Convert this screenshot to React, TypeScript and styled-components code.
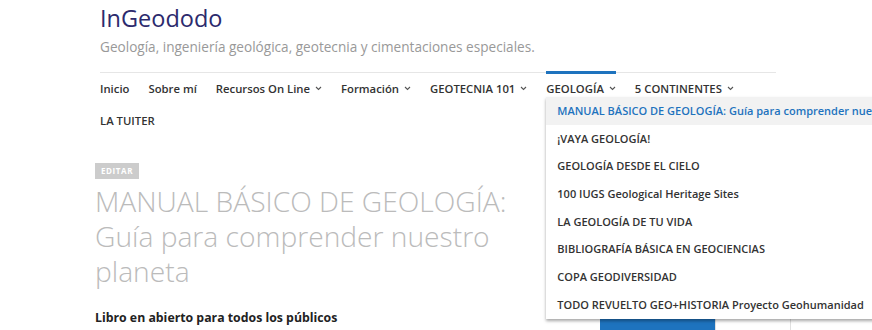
import React from "react";
import styled, { createGlobalStyle } from "styled-components";

const GlobalStyle = createGlobalStyle`
  html, body {
    margin: 0;
    padding: 0;
    background: #fff;
    overflow: hidden;
  }
  body {
    font-family: "Open Sans", "Liberation Sans", sans-serif;
    color: #333;
  }
  * { box-sizing: border-box; }
`;

const Page = styled.div`
  width: 872px;
  height: 330px;
  overflow: hidden;
`;

const Header = styled.header`
  padding: 0 96px 0 100px;
`;

const Branding = styled.div`
  padding-top: 3px;
  height: 72px;
`;

const SiteTitle = styled.div`
  font-size: 23.5px;
  line-height: 30px;
  color: #2c2a6d;
`;

const Tagline = styled.div`
  margin-top: 4px;
  font-size: 13.6px;
  line-height: 20px;
  color: #999;
`;

const Nav = styled.nav`
  border-top: 1px solid #e6e6e6;
  width: 676px;
  padding-top: 3px;
`;

const Menu = styled.ul`
  list-style: none;
  margin: 0;
  padding: 0;
  display: flex;
  flex-wrap: wrap;
  row-gap: 8px;
`;

const MenuItem = styled.li<{ $active?: boolean }>`
  position: relative;
  display: flex;
  align-items: center;
  gap: 5px;
  height: 24px;
  margin-right: 19px;
  font-size: 11.3px;
  font-weight: 600;
  color: #333;
  white-space: nowrap;

  &::before {
    content: "";
    display: ${(p) => (p.$active ? "block" : "none")};
    position: absolute;
    left: 0;
    right: 0;
    top: -5px;
    height: 3px;
    background: #1e73be;
  }
`;

const Dropdown = styled.ul`
  position: absolute;
  top: calc(100% - 3px);
  left: 0;
  z-index: 10;
  list-style: none;
  margin: 0;
  padding: 0;
  background: #fff;
  box-shadow: 0 2px 3px rgba(0, 0, 0, 0.35);
`;

const DropdownItem = styled.li<{ $current?: boolean }>`
  height: 27.7px;
  line-height: 27.7px;
  padding: 0 11px;
  font-size: 11px;
  font-weight: 600;
  white-space: nowrap;
  color: ${(p) => (p.$current ? "#1e73be" : "#333")};
  background: ${(p) => (p.$current ? "#f2f2f2" : "#fff")};
`;

const Body = styled.div`
  display: grid;
  grid-template-columns: 425px 1fr;
  column-gap: 80px;
  padding-left: 95px;
`;

const Article = styled.article`
  padding-top: 25px;
`;

const EditBadge = styled.span`
  display: inline-block;
  background: #ccc;
  color: #fff;
  font-size: 8px;
  font-weight: 700;
  letter-spacing: 0.6px;
  line-height: 16px;
  padding: 0 6px;
`;

const Title = styled.h1`
  margin: 5px 0 0;
  font-size: 28.2px;
  font-weight: 300;
  line-height: 35px;
  color: #bbb;
`;

const Lead = styled.p`
  margin: 20px 0 0;
  font-size: 12.3px;
  font-weight: 700;
  color: #222;
`;

const Sidebar = styled.aside`
  padding-top: 186px;
  display: flex;
`;

const Tab = styled.div<{ $selected?: boolean }>`
  height: 30px;
  width: ${(p) => (p.$selected ? "115px" : "76px")};
  background: ${(p) => (p.$selected ? "#1e73be" : "#fff")};
  border: 1px solid ${(p) => (p.$selected ? "#1e73be" : "#e0e0e0")};
`;

const Chevron = () => (
  <svg width="7" height="5" viewBox="0 0 7 5" fill="none">
    <path d="M1 1l2.5 2.5L6 1" stroke="#555" strokeWidth="1.1" />
  </svg>
);

const geologia = [
  "MANUAL BÁSICO DE GEOLOGÍA: Guía para comprender nuestro planeta",
  "¡VAYA GEOLOGÍA!",
  "GEOLOGÍA DESDE EL CIELO",
  "100 IUGS Geological Heritage Sites",
  "LA GEOLOGÍA DE TU VIDA",
  "BIBLIOGRAFÍA BÁSICA EN GEOCIENCIAS",
  "COPA GEODIVERSIDAD",
  "TODO REVUELTO GEO+HISTORIA Proyecto Geohumanidad",
];

export default function App() {
  return (
    <Page>
      <GlobalStyle />
      <Header>
        <Branding>
          <SiteTitle>InGeododo</SiteTitle>
          <Tagline>Geología, ingeniería geológica, geotecnia y cimentaciones especiales.</Tagline>
        </Branding>
        <Nav>
          <Menu>
            <MenuItem>Inicio</MenuItem>
            <MenuItem>Sobre mí</MenuItem>
            <MenuItem>Recursos On Line <Chevron /></MenuItem>
            <MenuItem>Formación <Chevron /></MenuItem>
            <MenuItem>GEOTECNIA 101 <Chevron /></MenuItem>
            <MenuItem $active>
              GEOLOGÍA <Chevron />
              <Dropdown>
                {geologia.map((t, i) => (
                  <DropdownItem key={t} $current={i === 0}>{t}</DropdownItem>
                ))}
              </Dropdown>
            </MenuItem>
            <MenuItem>5 CONTINENTES <Chevron /></MenuItem>
            <MenuItem>LA TUITER</MenuItem>
          </Menu>
        </Nav>
      </Header>
      <Body>
        <Article>
          <EditBadge>EDITAR</EditBadge>
          <Title>MANUAL BÁSICO DE GEOLOGÍA: Guía para comprender nuestro planeta</Title>
          <Lead>Libro en abierto para todos los públicos</Lead>
        </Article>
        <Sidebar>
          <Tab $selected />
          <Tab />
        </Sidebar>
      </Body>
    </Page>
  );
}
